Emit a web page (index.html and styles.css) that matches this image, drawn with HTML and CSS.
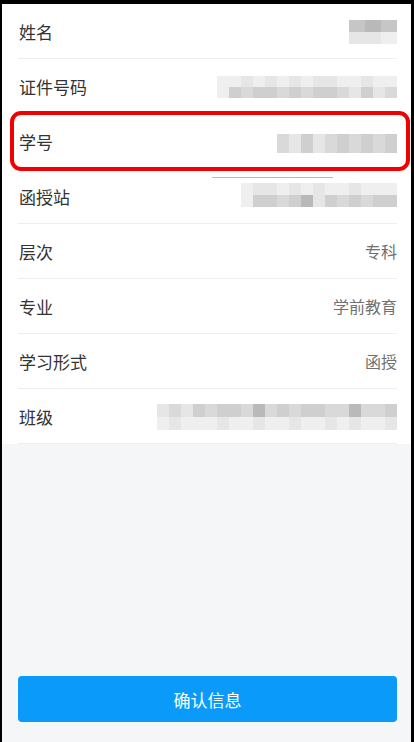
FILE: index.html
```html
<!DOCTYPE html>
<html lang="zh">
<head>
  <meta charset="UTF-8">
  <title>确认信息</title>
  <link rel="stylesheet" href="styles.css">
</head>
<body>
  <div class="screen">
    <ul class="info">
      <li class="row">
        <span class="label">姓名</span>
        <span class="mosaic m-name">
          <i class="d2"></i><i class="d1"></i><i class="d2"></i><i class="l1"></i><i class="l1"></i><i class="l2"></i>
        </span>
      </li>
      <li class="row">
        <span class="label">证件号码</span>
        <span class="mosaic m-id">
          <i class="l2"></i><i class="l2"></i><i class="l1"></i><i class="l2"></i><i class="l1"></i><i class="l2"></i><i class="l1"></i><i class="l2"></i><i class="l1"></i><i class="l1"></i><i class="l2"></i><i class="l2"></i><i class="l1"></i><i class="l2"></i><i class="l2"></i>
          <i class="l2"></i><i class="m1"></i><i class="m2"></i><i class="m1"></i><i class="m1"></i><i class="m2"></i><i class="m1"></i><i class="m2"></i><i class="m1"></i><i class="m1"></i><i class="m2"></i><i class="l1"></i><i class="m1"></i><i class="l1"></i><i class="m2"></i>
        </span>
      </li>
      <li class="row">
        <span class="label">学号</span>
        <span class="mosaic m-no">
          <i class="m2"></i><i class="l1"></i><i class="m1"></i><i class="l1"></i><i class="m2"></i><i class="m1"></i><i class="m2"></i><i class="m1"></i><i class="m2"></i><i class="m1"></i>
        </span>
      </li>
      <li class="row">
        <span class="label">函授站</span>
        <span class="mosaic m-station">
          <i class="l2"></i><i class="l1"></i><i class="l1"></i><i class="l2"></i><i class="l1"></i><i class="l2"></i><i class="l1"></i><i class="l2"></i><i class="l2"></i><i class="l1"></i><i class="l2"></i><i class="l2"></i><i class="l2"></i>
          <i class="l2"></i><i class="m1"></i><i class="m1"></i><i class="m2"></i><i class="m1"></i><i class="d1"></i><i class="l1"></i><i class="m1"></i><i class="m2"></i><i class="m1"></i><i class="m2"></i><i class="m1"></i><i class="m1"></i>
        </span>
        <span class="stray"></span>
      </li>
      <li class="row">
        <span class="label">层次</span>
        <span class="value">专科</span>
      </li>
      <li class="row">
        <span class="label">专业</span>
        <span class="value">学前教育</span>
      </li>
      <li class="row">
        <span class="label">学习形式</span>
        <span class="value">函授</span>
      </li>
      <li class="row">
        <span class="label">班级</span>
        <span class="mosaic m-class">
          <i class="l1"></i><i class="m2"></i><i class="l1"></i><i class="m1"></i><i class="m2"></i><i class="m1"></i><i class="m1"></i><i class="m2"></i><i class="d1"></i><i class="m2"></i><i class="m1"></i><i class="m2"></i><i class="m1"></i><i class="m1"></i><i class="m2"></i><i class="m2"></i><i class="d1"></i><i class="m2"></i><i class="m2"></i><i class="m1"></i>
          <i class="l2"></i><i class="l1"></i><i class="l2"></i><i class="l2"></i><i class="l2"></i><i class="l1"></i><i class="l2"></i><i class="l2"></i><i class="l1"></i><i class="l2"></i><i class="l2"></i><i class="l1"></i><i class="l2"></i><i class="l2"></i><i class="l1"></i><i class="l2"></i><i class="l1"></i><i class="l2"></i><i class="l2"></i><i class="l1"></i>
        </span>
      </li>
    </ul>

    <div class="highlight"></div>

    <div class="footer">
      <button class="confirm">确认信息</button>
    </div>
  </div>
</body>
</html>
```

FILE: styles.css
```css
* {
  margin: 0;
  padding: 0;
  box-sizing: border-box;
}

body {
  background: #000;
  font-family: "Noto Sans CJK SC", "Noto Sans", sans-serif;
}

.screen {
  position: relative;
  width: 414px;
  height: 742px;
  border-top: 4px solid #000;
  border-left: 2px solid #000;
  border-right: 3px solid #000;
  background: #f5f6f8;
  display: flex;
  flex-direction: column;
}

.info {
  list-style: none;
  background: #fff;
  padding: 0 14px 0 16px;
}

.row {
  position: relative;
  height: 55px;
  display: flex;
  align-items: center;
  justify-content: space-between;
  border-bottom: 1px solid #eeeeee;
}

.label {
  font-size: 17px;
  color: #333;
  padding-left: 1px;
}

.value {
  font-size: 16px;
  color: #707070;
}

/* pixelated placeholders for the blurred values */
.mosaic {
  display: grid;
  grid-auto-rows: 12px;
}

.mosaic i {
  display: block;
}

.m-name {
  grid-template-columns: repeat(3, 16px);
  margin-top: 2px;
}

.m-id {
  grid-template-columns: repeat(15, 12px);
  grid-auto-rows: 11px;
  margin-top: 2px;
}

.m-no {
  grid-template-columns: repeat(10, 12px);
  grid-auto-rows: 19px;
  margin-top: 4px;
}

.m-station {
  grid-template-columns: repeat(13, 12px);
  margin-top: -2px;
}

.m-class {
  grid-template-columns: repeat(20, 12px);
  grid-auto-rows: 13px;
  margin-top: 2px;
}

.d1 { background: #b9b9b9; }
.d2 { background: #c6c6c6; }
.m1 { background: #cfcfcf; }
.m2 { background: #d9d9d9; }
.l1 { background: #e6e6e6; }
.l2 { background: #efefef; }

.stray {
  position: absolute;
  left: 194px;
  top: 8px;
  width: 121px;
  height: 1px;
  background: #f0a0a0;
}

.highlight {
  position: absolute;
  left: 8px;
  top: 107px;
  width: 400px;
  height: 60px;
  border: 4px solid #f00000;
  border-radius: 11px;
}

.footer {
  flex: 1;
  display: flex;
  align-items: flex-end;
  padding: 0 14px 20px 16px;
}

.confirm {
  width: 100%;
  height: 46px;
  border: none;
  border-radius: 4px;
  background: #0a9bfa;
  color: #fff;
  font-family: "Noto Sans CJK SC", "Noto Sans", sans-serif;
  font-size: 17px;
}
```
